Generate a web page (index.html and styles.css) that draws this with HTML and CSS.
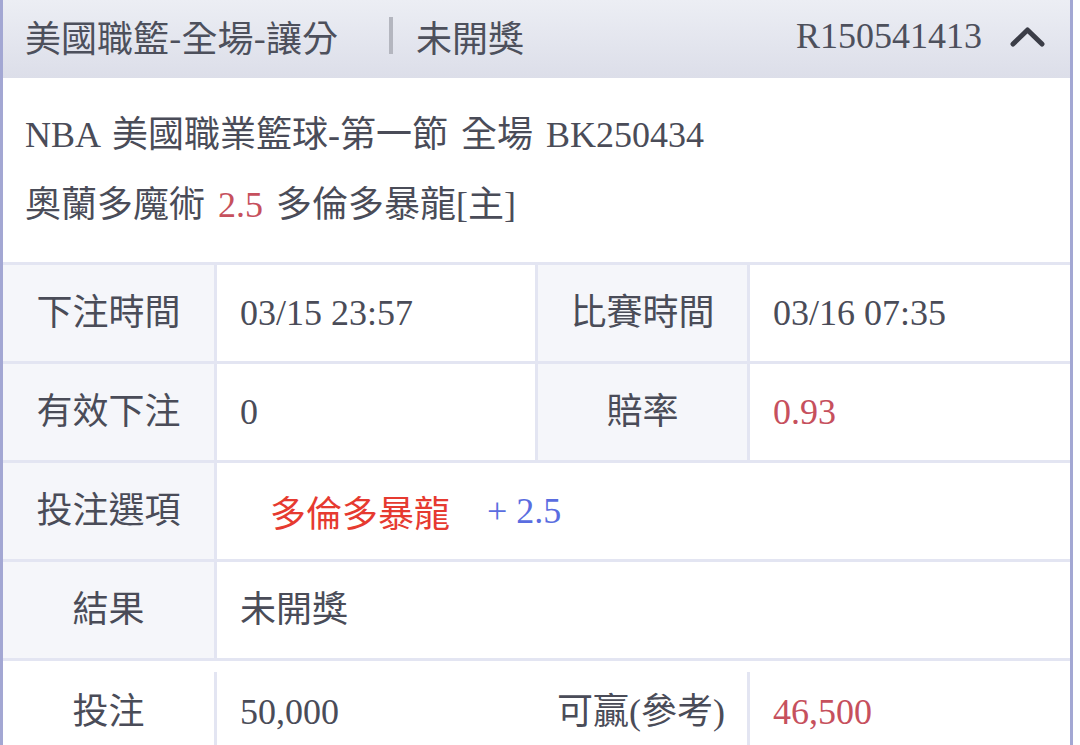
FILE: index.html
```html
<!DOCTYPE html>
<html lang="zh-Hant">
<head>
<meta charset="utf-8">
<link rel="stylesheet" href="styles.css">
</head>
<body>
<div class="card">
  <div class="head">
    <span class="head-title">美國職籃-全場-讓分</span>
    <span class="sep"></span>
    <span class="head-status">未開獎</span>
    <span class="head-id">R150541413</span>
    <svg class="chev" width="36" height="22" viewBox="0 0 36 22"><polyline points="3,18 17.5,4 32,18" fill="none" stroke="#3b3d47" stroke-width="5" stroke-linecap="round" stroke-linejoin="round"/></svg>
  </div>
  <div class="info">
    <div class="line">NBA 美國職業籃球-第一節 全場 BK250434</div>
    <div class="line">奧蘭多魔術 <span class="red">2.5</span> 多倫多暴龍[主]</div>
  </div>
  <div class="table">
    <div class="row">
      <div class="cell lab">下注時間</div>
      <div class="cell val">03/15 23:57</div>
      <div class="cell lab">比賽時間</div>
      <div class="cell val">03/16 07:35</div>
    </div>
    <div class="row">
      <div class="cell lab">有效下注</div>
      <div class="cell val">0</div>
      <div class="cell lab">賠率</div>
      <div class="cell val red">0.93</div>
    </div>
    <div class="row">
      <div class="cell lab">投注選項</div>
      <div class="cell val span3"><span class="team">多倫多暴龍</span><span class="hcp">+ 2.5</span></div>
    </div>
    <div class="row">
      <div class="cell lab">結果</div>
      <div class="cell val span3">未開獎</div>
    </div>
    <div class="row last">
      <div class="cell lab">投注</div>
      <div class="cell val">50,000</div>
      <div class="cell lab nob">可贏(參考)</div>
      <div class="cell val red">46,500</div>
    </div>
  </div>
</div>
</body>
</html>
```

FILE: styles.css
```css
html, body {
  margin: 0;
  padding: 0;
  background: #ffffff;
  height: 745px;
  overflow: hidden;
}
body {
  font-family: "Liberation Serif", "Noto Sans CJK TC", serif;
  font-size: 36px;
  color: #4a4c58;
}
.card {
  width: 1067px;
  height: 745px;
  overflow: hidden;
  border-left: 3px solid #a3a7d3;
  border-right: 3px solid #a3a7d3;
  background: #ffffff;
}
.head {
  height: 78px;
  display: flex;
  align-items: center;
  padding: 0 24px 7px 22px;
  box-sizing: border-box;
  background: linear-gradient(#eceef4, #dcdee9);
  color: #4d505c;
}
.head-title, .head-status {
  font-family: "Noto Sans CJK TC", sans-serif;
  line-height: 1;
}
.sep {
  width: 4px;
  height: 37px;
  background: #b4b6bf;
  margin: 0 23px 0 51px;
}
.head-id {
  margin-left: auto;
  line-height: 1;
  margin-right: 28px;
}
.chev {
  display: block;
  margin-top: 2px;
}
.info {
  padding: 22px;
}
.line {
  height: 70px;
  line-height: 70px;
  white-space: nowrap;
  word-spacing: 4px;
}
.red {
  color: #c6505d;
}
.table {
  border-top: 3px solid #e3e5f2;
}
.row {
  display: grid;
  grid-template-columns: 211px 321px 212px 1fr;
  height: 96px;
  border-bottom: 3px solid #e3e5f2;
}
.cell {
  display: flex;
  align-items: center;
  white-space: nowrap;
  line-height: 1;
}
.cell + .cell {
  border-left: 3px solid #e3e5f2;
}
.lab {
  background: #f5f6fa;
  justify-content: center;
}
.val {
  padding-left: 23px;
}
.span3 {
  grid-column: span 3;
}
.team {
  color: #e63a30;
  margin-left: 30px;
  font-family: "Noto Sans CJK TC", sans-serif;
}
.hcp {
  color: #5a6de0;
  margin-left: 37px;
}
.row.last {
  height: 100px;
  border-bottom: none;
  padding-top: 11px;
  box-sizing: border-box;
  align-items: stretch;
}
.row.last .cell {
  height: 80px;
}
.row.last .lab {
  background: #ffffff;
}
.row.last .nob {
  border-left: none;
}
```
